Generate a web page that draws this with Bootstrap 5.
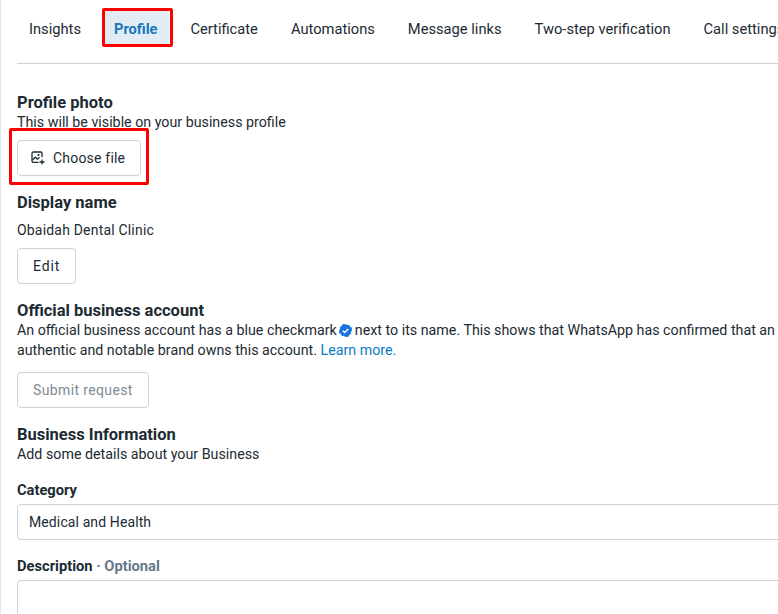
<!DOCTYPE html>
<html lang="en"><head><meta charset="utf-8"><title>Profile</title>
<link href="https://cdn.jsdelivr.net/npm/bootstrap@5.3.0/dist/css/bootstrap.min.css" rel="stylesheet">
<style>
html,body{height:614px;overflow:hidden;background:#fff}
body{font-family:Roboto,sans-serif;font-size:14.25px;line-height:20px;color:#1c2b33;border-left:1px solid #e4e6ea}
.page-wrap{width:900px;padding:0 0 0 16px;position:relative}
.tab-row{height:64px;border-bottom:1px solid #cbd2d9;align-items:flex-start;padding-top:11px;gap:9px}
.tab-item{height:36px;line-height:36px;padding:0 12px;color:#1c2b33;text-decoration:none;white-space:nowrap;border-radius:4px;font-size:14.7px}
.tab-item.on{background:#e1ecf5;color:#1877b8;font-weight:700;font-size:14.6px}
.sec-title{font-size:16.500px;font-weight:700;line-height:20px;margin:0;padding-top:1px;height:20px}
.sec-text{margin:0;width:761px}
.sec-name{font-size:14px;letter-spacing:.19px}
.act-btn{height:36px;border:1px solid #cbd2d9;border-radius:4px;background:#fff;color:#1c2b33;font-size:14px;letter-spacing:.37px;padding:0 15px;display:inline-flex;align-items:center;gap:8px}
.act-icon{margin-left:-2px}
.file-btn{letter-spacing:.2px}
.edit-btn{letter-spacing:.85px}
.act-btn:disabled{color:#7d8a93;opacity:1;border-color:#cbd2d9}
.field-label{font-weight:700;font-size:14.700px;line-height:20px;margin:0 0 4px}
.field-opt{color:#67788a}
.field-box{height:36px;width:800px;border:1px solid #cbd2d9;border-radius:4px;padding:0 11px;line-height:34px;font-size:14px;letter-spacing:.11px}
.field-area{height:80px}
.more-link{color:#0a7cc4;text-decoration:none}
.tick{vertical-align:-2px;margin:0 -1px 0 -1px}
.red-box{position:absolute;border:3px solid #f00;border-radius:2px;pointer-events:none}
.sec-one{margin-top:28px}
.sec-one .act-btn{margin-top:8px}
.sec-two,.sec-three,.sec-four,.field-one,.field-two{margin-top:16px}
.sec-name,.sec-two .act-btn{margin-top:8px}
.sec-three .act-btn{margin-top:12px}
.red-a{left:101px;top:8px;width:71px;height:39px}
.red-b{left:8px;top:128px;width:140px;height:57px}
</style></head><body>
<div class="page-wrap">
  <nav class="tab-row d-flex">
    <a class="tab-item" href="#">Insights</a>
    <a class="tab-item on" href="#">Profile</a>
    <a class="tab-item" href="#">Certificate</a>
    <a class="tab-item" href="#">Automations</a>
    <a class="tab-item" href="#">Message links</a>
    <a class="tab-item" href="#">Two-step verification</a>
    <a class="tab-item" href="#">Call settings</a>
  </nav>
  <section class="sec-one">
    <h2 class="sec-title">Profile photo</h2>
    <p class="sec-text">This will be visible on your business profile</p>
    <button class="act-btn file-btn" type="button"><svg class="act-icon" width="14" height="14" viewBox="0 0 14 14" fill="none" stroke="#1c2b33" stroke-width="1.300"><path d="M7.500 11.300H2.300A1.300 1.300 0 0 1 1 10V2.300A1.300 1.300 0 0 1 2.300 1h7.400A1.300 1.300 0 0 1 11 2.300v4"/><path d="M1.500 9l2.800-2.800 2 2 2.200-2"/><circle cx="7.500" cy="4" r="1.100" fill="#1c2b33" stroke="none"/><path d="M11 8.500v5M8.500 11h5"/></svg>Choose file</button>
  </section>
  <section class="sec-two">
    <h2 class="sec-title">Display name</h2>
    <p class="sec-text sec-name">Obaidah Dental Clinic</p>
    <button class="act-btn edit-btn" type="button">Edit</button>
  </section>
  <section class="sec-three">
    <h2 class="sec-title">Official business account</h2>
    <p class="sec-text">An official business account has a blue checkmark <svg class="tick" width="13" height="13" viewBox="0 0 13 13"><path fill="#1b74e4" d="M6.500 0l1.700 1.100 2-.1.900 1.800 1.800.9-.1 2L13 6.500l-1.200 1.700.1 2-1.800.9-.9 1.800-2-.1L6.500 13l-1.700-1.200-2 .1-.9-1.800-1.800-.9.1-2L0 6.500l1.100-1.700-.1-2 1.800-.9.900-1.800 2 .1z"/><path d="M3.800 6.700l1.900 1.900 3.500-3.600" fill="none" stroke="#fff" stroke-width="1.400"/></svg> next to its name. This shows that WhatsApp has confirmed that an authentic and notable brand owns this account. <a class="more-link" href="#">Learn more.</a></p>
    <button class="act-btn" type="button" disabled>Submit request</button>
  </section>
  <section class="sec-four">
    <h2 class="sec-title">Business Information</h2>
    <p class="sec-text">Add some details about your Business</p>
  </section>
  <div class="field-one"><p class="field-label">Category</p><div class="field-box">Medical and Health</div></div>
  <div class="field-two"><p class="field-label">Description <span class="field-opt">· Optional</span></p><div class="field-box field-area"></div></div>
  <div class="red-box red-a"></div>
  <div class="red-box red-b"></div>
</div>
<script src="https://cdn.jsdelivr.net/npm/bootstrap@5.3.0/dist/js/bootstrap.bundle.min.js"></script>
</body></html>
